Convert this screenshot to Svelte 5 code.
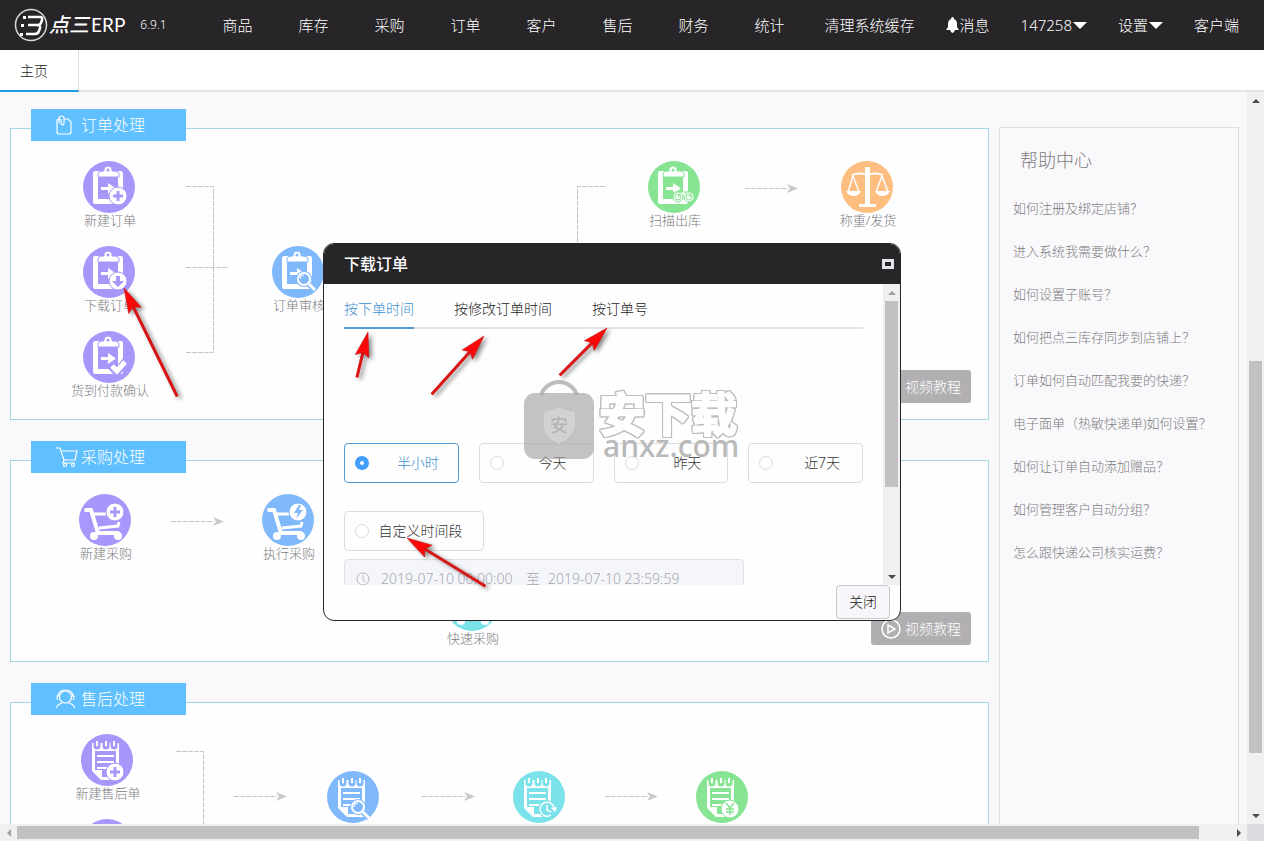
<script>
  const menu = ['商品', '库存', '采购', '订单', '客户', '售后', '财务', '统计'];

  // node x / y are the centre of the round icon inside the panel
  const panels = [
    {
      title: '订单处理',
      icon: 'note',
      size: 'tall',
      video: true,
      nodes: [
        { label: '新建订单', x: 98, y: 58, color: 'purple', icon: 'clipboard', badge: 'plus' },
        { label: '下载订单', x: 98, y: 143, color: 'purple', icon: 'clipboard', badge: 'down' },
        { label: '货到付款确认', x: 98, y: 228, color: 'purple', icon: 'clipboard', badge: 'check' },
        { label: '订单审核', x: 287, y: 143, color: 'blue', icon: 'clipboard', badge: 'search' },
        { label: '扫描出库', x: 663, y: 58, color: 'green', icon: 'clipboard', badge: 'scan' },
        { label: '称重/发货', x: 856, y: 58, color: 'orange', icon: 'scale' }
      ],
      lines: ['M175 57.5H202.5V223.5H175', 'M175 138.5H218', 'M594 57.5H566.5V170'],
      arrows: [{ x: 734, y: 59 }]
    },
    {
      title: '采购处理',
      icon: 'cart',
      size: 'short',
      video: true,
      nodes: [
        { label: '新建采购', x: 94, y: 59, color: 'purple', icon: 'cart', badge: 'plus' },
        { label: '执行采购', x: 277, y: 59, color: 'blue', icon: 'cart', badge: 'bolt' },
        { label: '快速采购', x: 461, y: 144, color: 'cyan', icon: 'cart', badge: 'bolt' }
      ],
      lines: [],
      arrows: [{ x: 160, y: 60 }]
    },
    {
      title: '售后处理',
      icon: 'service',
      size: 'tall',
      video: false,
      nodes: [
        { label: '新建售后单', x: 96, y: 57, color: 'purple', icon: 'notepad', badge: 'plus' },
        { label: '', x: 96, y: 142, color: 'purple', icon: 'notepad', badge: 'plus' },
        { label: '', x: 342, y: 94, color: 'blue', icon: 'notepad', badge: 'search' },
        { label: '', x: 528, y: 94, color: 'cyan', icon: 'notepad', badge: 'clock' },
        { label: '', x: 711, y: 94, color: 'green', icon: 'notepad', badge: 'yen' }
      ],
      lines: ['M165 48.5H192.5V133'],
      arrows: [{ x: 223, y: 93 }, { x: 411, y: 93 }, { x: 594, y: 93 }]
    }
  ];

  const helpLinks = [
    '如何注册及绑定店铺？',
    '进入系统我需要做什么？',
    '如何设置子账号？',
    '如何把点三库存同步到店铺上？',
    '订单如何自动匹配我要的快递？',
    '电子面单（热敏快递单)如何设置？',
    '如何让订单自动添加赠品？',
    '如何管理客户自动分组？',
    '怎么跟快递公司核实运费？'
  ];

  const tabs = ['按下单时间', '按修改订单时间', '按订单号'];
  const ranges = ['半小时', '今天', '昨天', '近7天'];

  // red pointers: tail -> tip
  const pointers = [
    { x1: 177, y1: 396, x2: 124, y2: 288 },
    { x1: 357, y1: 377, x2: 368, y2: 332 },
    { x1: 432, y1: 394, x2: 484, y2: 336 },
    { x1: 560, y1: 375, x2: 607, y2: 328 },
    { x1: 485, y1: 586, x2: 407, y2: 538 }
  ].map((p) => ({
    ...p,
    angle: (Math.atan2(p.y2 - p.y1, p.x2 - p.x1) * 180) / Math.PI,
    length: Math.hypot(p.x2 - p.x1, p.y2 - p.y1)
  }));

  let activeTab = tabs[0];
  let range = ranges[0];
  let startTime = '2019-07-10 00:00:00';
  let endTime = '2019-07-10 23:59:59';
  let open = true;

  const badgeCenter = {
    clipboard: '35 35',
    cart: '36 18',
    notepad: '34 38'
  };
</script>

{#snippet scrollbar(direction, before, thumb, after)}
  <div class="scrollbar {direction}" aria-hidden="true">
    <span class="step back" class:dim={before === 0}></span>
    <span style="flex: {before}"></span>
    <span class="thumb" style="flex: {thumb}"></span>
    <span style="flex: {after}"></span>
    <span class="step forward"></span>
  </div>
{/snippet}

{#snippet badge(kind, center)}
  <g transform="translate({center})">
    {#if kind === 'plus'}
      <circle r="9" class="chip" />
      <path d="M-5 0H5M0-5V5" class="ink" stroke-width="3" />
    {:else if kind === 'down'}
      <circle r="9" class="chip" />
      <path d="M-2-5H2V0H6L0 6L-6 0H-2Z" fill="currentColor" />
    {:else if kind === 'bolt'}
      <circle r="9" class="chip" />
      <path d="M1-7L-4 1H0L-2 7L5-2H1L3-7Z" fill="currentColor" />
    {:else if kind === 'check'}
      <path d="M-7 0L-1 6L8-5" class="ink" stroke-width="8" />
      <path d="M-6 0L-1 5L7-4" class="line" stroke-width="5" />
    {:else if kind === 'search'}
      <circle cx="-3" cy="-2" r="8" fill="currentColor" />
      <path d="M2 3L8 9" class="ink" stroke-width="6" />
      <path d="M2 3L8 9" class="line" stroke-width="3" />
      <circle cx="-3" cy="-2" r="6" fill="currentColor" stroke="#fff" stroke-width="2" />
      <path d="M-7-2A4 4 0 0 1-3-6" class="line" stroke-width="1" />
    {:else if kind === 'scan'}
      <path d="M-9-4H8L11 2H-11Z" fill="#fff" stroke="currentColor" />
      <circle cx="-5" cy="1" r="5" class="chip" />
      <circle cx="6" cy="1" r="5" class="chip" />
      <circle cx="-5" cy="1" r="3" fill="none" stroke="currentColor" />
      <circle cx="6" cy="1" r="3" fill="none" stroke="currentColor" />
      <circle cx="-4" cy="0" r="1" fill="currentColor" />
      <circle cx="7" cy="0" r="1" fill="currentColor" />
    {:else if kind === 'clock'}
      <circle r="8" fill="currentColor" stroke="currentColor" stroke-width="2" />
      <path d="M4 6A7 7 0 1 1 7-1M0-4V1L4 3" class="line" stroke-width="1.5" />
      <path d="M4-1L10-2L8 3Z" fill="#fff" />
    {:else if kind === 'yen'}
      <circle r="9" class="chip" />
      <path d="M-4-6L0-1L4-6M0-1V6M-4 0H4M-4 3H4" class="ink" stroke-width="1.5" />
    {/if}
  </g>
{/snippet}

{#snippet nodeIcon(node)}
  <svg class="node-icon {node.color}" viewBox="0 0 52 52" aria-hidden="true">
    <circle cx="26" cy="26" r="26" fill="currentColor" />
    {#if node.icon === 'clipboard'}
      <rect x="10" y="10" width="30" height="33" rx="2" fill="#fff" />
      <rect x="15" y="15" width="20" height="23" fill="currentColor" />
      <path
        d="M15 16V13Q15 10 19 10H21V8Q22 5 25 5Q28 5 29 8V10H32Q36 10 36 13V16Z"
        fill="#fff"
        stroke="currentColor"
      />
      <circle cx="25" cy="9" r="1.5" fill="currentColor" />
      <path d="M18 26H25V22L33 27.5L25 33V29H18Z" fill="#fff" />
    {:else if node.icon === 'cart'}
      <path d="M7 16H12L19 39H39" class="line" stroke-width="4" stroke-linecap="round" />
      <path d="M15 20H27M20 34L39 32L40 28" class="line" stroke-width="3" />
      <circle cx="15" cy="42" r="4" fill="#fff" />
      <circle cx="39" cy="42" r="4" fill="#fff" />
    {:else if node.icon === 'notepad'}
      <path d="M11 9H38V46H20L11 37Z" fill="#fff" />
      <path d="M14 17H35V43H21V36H14Z" fill="currentColor" />
      <path d="M14 37H20V43Z" fill="#fff" />
      <path d="M16 22H33M16 28H33M16 34H31" class="line" stroke-width="2" />
      {#each [16, 25, 33] as x}
        <path d="M{x - 2} 7V12A2 2 0 0 0 {x + 2} 12V7" class="ink" stroke-width="3" />
        <path d="M{x} 7V12" class="line" stroke-width="2" />
      {/each}
    {:else if node.icon === 'scale'}
      <path d="M24 6H29V43H35V46H18V43H24Z" fill="#fff" />
      <path d="M11 14Q18 11 26 14Q34 11 42 14" class="line" stroke-width="2" />
      <path d="M12 15L7 31M12 15L18 31M41 15L35 31M41 15L47 31" class="line" stroke-width="1.5" />
      <path d="M5 30H20Q18 35 12.5 35Q7 35 5 30ZM34 30H49Q47 35 41.5 35Q36 35 34 30Z" fill="#fff" />
    {/if}
    {#if node.badge}
      {@render badge(node.badge, badgeCenter[node.icon])}
    {/if}
  </svg>
{/snippet}

<div class="page">
  <header class="topbar">
    <a class="logo" href="#home" aria-label="点三ERP">
      <svg width="34" height="34" viewBox="0 0 34 34" aria-hidden="true">
        <circle cx="17" cy="17" r="15.5" fill="none" stroke="#d9d9db" stroke-width="1.5" />
        <path
          d="M14 9H26Q29 9 28 12L27 15Q26 17 23 17H14M23 17Q27 17 26 20L25 23Q24 26 21 26H12"
          fill="none"
          stroke="#fff"
          stroke-width="2.5"
        />
        <path d="M9 8H12V11H9ZM7 16H10V19H7ZM6 25H9V28H6Z" fill="#fff" />
      </svg>
      <span class="brand-cn">点三</span><span class="brand-en">ERP</span>
    </a>
    <span class="version">6.9.1</span>
    <nav class="menu">
      <div class="menu-main">
        {#each menu as item}
          <a href="#menu">{item}</a>
        {/each}
      </div>
      <div class="menu-side">
        <a href="#cache">清理系统缓存</a>
        <a href="#message">
          <svg width="13" height="16" viewBox="0 0 13 16" aria-hidden="true">
            <path d="M6.5 0Q8 0 8 2Q11 3 11 7V10L13 13H0L2 10V7Q2 3 5 2Q5 0 6.5 0ZM4 13H9Q8 16 6.5 16Q5 16 4 13Z" fill="#fff" />
          </svg>消息
        </a>
        <a href="#account">147258<span class="caret"></span></a>
        <a href="#settings">设置<span class="caret"></span></a>
        <a href="#client">客户端</a>
      </div>
    </nav>
  </header>

  <div class="tabstrip">
    <a class="page-tab" href="#home">主页</a>
  </div>

  <div class="workspace">
    <main class="content">
      <div class="panels">
        {#each panels as panel}
          <section class="panel {panel.size}">
            <h2 class="panel-title">
              <svg width="24" height="22" viewBox="0 0 24 22" aria-hidden="true">
                {#if panel.icon === 'note'}
                  <path d="M6 5H4Q2 5 2 7V18Q2 20 4 20H14Q16 20 16 18V8L13 5H9M4 9V4Q4 2 6.5 2Q9 2 9 4V9Q9 11 7.5 11Q6 11 6 9V5" />
                {:else if panel.icon === 'cart'}
                  <path d="M1 2H5L9 14H20L22 5H7M9 14L8 17H20" />
                  <circle cx="10" cy="19" r="1.5" />
                  <circle cx="18" cy="19" r="1.5" />
                {:else}
                  <circle cx="10.5" cy="9" r="6" />
                  <path d="M3 9Q3 2 10.5 2Q18 2 18 9M3 7Q1 9 3 12M18 7Q20 9 18 12M1 20Q3 16 7 15M20 20Q18 16 14 15" />
                {/if}
              </svg>
              {panel.title}
            </h2>
            <svg class="links" aria-hidden="true">
              {#each panel.lines as d}
                <path {d} class="dash" />
              {/each}
              {#each panel.arrows as arrow}
                <g transform="translate({arrow.x} {arrow.y})">
                  <path d="M0 0.5H43" class="dash" />
                  <path d="M42-4L53 0.5L42 5L45 0.5Z" fill="#c9c9cb" />
                </g>
              {/each}
            </svg>
            {#each panel.nodes as node}
              <a class="node" href="#node" style="left: {node.x}px; top: {node.y}px">
                {@render nodeIcon(node)}
                <span>{node.label}</span>
              </a>
            {/each}
            {#if panel.video}
              <button class="video">
                <svg width="20" height="20" viewBox="0 0 20 20" aria-hidden="true">
                  <circle cx="10" cy="10" r="9" fill="none" stroke="#fff" stroke-width="1.5" />
                  <path d="M7 6L14 10L7 14Z" fill="none" stroke="#fff" stroke-width="1.5" />
                </svg>
                视频教程
              </button>
            {/if}
          </section>
        {/each}
      </div>

      <aside class="help">
        <h2>帮助中心</h2>
        <ul>
          {#each helpLinks as link}
            <li><a href="#help">{link}</a></li>
          {/each}
        </ul>
      </aside>
    </main>
    {@render scrollbar('vertical', 252, 392, 54)}
  </div>
  <div class="bottom">
    {@render scrollbar('horizontal', 0, 1182, 31)}
    <span class="corner"></span>
  </div>

  {#if open}
    <div class="dialog" role="dialog" aria-labelledby="dialog-title">
      <div class="dialog-head">
        <h1 id="dialog-title">下载订单</h1>
        <button class="restore" aria-label="还原"></button>
      </div>
      <div class="dialog-main">
        <div class="dialog-body">
          <div class="tabs" role="tablist">
            {#each tabs as tab}
              <button
                role="tab"
                aria-selected={activeTab === tab}
                class:active={activeTab === tab}
                on:click={() => (activeTab = tab)}
              >
                {tab}
              </button>
            {/each}
          </div>
          <div class="ranges">
            {#each ranges as item}
              <label class="option" class:checked={range === item}>
                <input type="radio" name="range" value={item} bind:group={range} />
                <span>{item}</span>
              </label>
            {/each}
          </div>
          <label class="option custom" class:checked={range === 'custom'}>
            <input type="radio" name="range" value="custom" bind:group={range} />
            <span>自定义时间段</span>
          </label>
          <div class="period">
            <svg width="14" height="14" viewBox="0 0 14 14" aria-hidden="true">
              <circle cx="7" cy="7" r="6" fill="none" stroke="#b4b6bf" />
              <path d="M7 3V7L9 10" fill="none" stroke="#b4b6bf" />
            </svg>
            <input type="text" aria-label="开始时间" bind:value={startTime} disabled={range !== 'custom'} />
            <span>至</span>
            <input type="text" aria-label="结束时间" bind:value={endTime} disabled={range !== 'custom'} />
          </div>
        </div>
        {@render scrollbar('vertical', 0, 186, 81)}
      </div>
      <div class="dialog-foot">
        <button class="close" on:click={() => (open = false)}>关闭</button>
      </div>
    </div>
  {/if}

  <div class="watermark">
    <svg width="72" height="82" viewBox="0 0 72 82" aria-hidden="true">
      <path d="M18 16A19 19 0 0 1 54 16" fill="none" stroke="#bdbdbd" stroke-width="4" />
      <rect x="1" y="14" width="70" height="66" rx="11" fill="#aaa" fill-opacity="0.7" />
      <path d="M36 28Q43 32 52 33V47Q51 57 36 65Q21 57 21 47V33Q29 32 36 28Z" fill="#d2d2d2" />
      <text x="36" y="53" text-anchor="middle">安</text>
    </svg>
    <div class="mark-text">
      <span class="mark-cn">安下载</span>
      <span class="mark-en">anxz.com</span>
    </div>
  </div>

  <svg class="pointers" aria-hidden="true">
    {#each pointers as p}
      <g transform="translate({p.x2} {p.y2}) rotate({p.angle})">
        <path d="M{-p.length}-1L-20-1V1L{-p.length} 1Z" fill="#d81414" stroke="#d81414" stroke-linejoin="round" />
        <path d="M0 0L-25-7L-21 0L-25 7Z" fill="#fb0808" stroke="#c01010" stroke-width="0.5" />
      </g>
    {/each}
  </svg>
</div>

<style>
  :global(body) {
    margin: 0;
  }

  .page {
    position: relative;
    display: flex;
    flex-direction: column;
    height: 100vh;
    overflow: hidden;
    background: #f9f8fb;
    color: #222;
    font-family: 'Noto Sans', 'Noto Sans CJK SC', sans-serif;
    font-size: 14px;
    font-weight: 300;
    line-height: 20px;
  }

  a {
    color: inherit;
    text-decoration: none;
  }

  button,
  input {
    margin: 0;
    padding: 0;
    border: 0;
    background: none;
    color: inherit;
    font: inherit;
  }

  h1,
  h2,
  ul {
    margin: 0;
    padding: 0;
    font-weight: inherit;
    list-style: none;
  }

  /* top bar */
  .topbar {
    display: flex;
    align-items: center;
    height: 50px;
    padding: 0 25px 0 14px;
    background: #272528;
    color: #fff;
    white-space: nowrap;
  }

  .logo {
    display: flex;
    align-items: center;
  }

  .brand-cn {
    margin-left: 1px;
    font-size: 20px;
    font-style: italic;
    font-weight: 500;
  }

  .brand-en {
    margin-left: 2px;
    font-family: Lato, sans-serif;
    font-size: 19px;
    font-weight: 400;
  }

  .version {
    margin-left: 15px;
    font-size: 12px;
  }

  .menu {
    display: flex;
    gap: 40px;
    margin-left: auto;
    font-size: 15px;
  }

  .menu-main {
    display: flex;
    gap: 46px;
  }

  .menu-side {
    display: flex;
    gap: 31px;
  }

  .menu-side a {
    display: flex;
    align-items: center;
    gap: 1px;
  }

  .caret {
    border: 7px solid transparent;
    border-top-color: #fff;
    border-bottom-width: 0;
  }

  /* page tabs */
  .tabstrip {
    display: flex;
    height: 40px;
    border-bottom: 2px solid #e2e1e5;
    background: #fff;
  }

  .page-tab {
    height: 40px;
    padding: 0 30px 0 20px;
    border-right: 1px solid #dcdcdf;
    border-bottom: 2px solid #1c9be0;
    line-height: 42px;
  }

  /* work area */
  .workspace {
    display: flex;
    flex: 1;
    min-height: 0;
  }

  .content {
    display: flex;
    flex: 1;
    gap: 10px;
    padding: 35px 8px 0 10px;
    overflow: hidden;
  }

  .panels {
    display: flex;
    flex: 1;
    flex-direction: column;
    gap: 40px;
    padding-top: 1px;
  }

  .panel {
    position: relative;
    flex-shrink: 0;
    border: 1px solid #a3d7e8;
    background: #fefefe;
  }

  .panel.tall {
    height: 290px;
  }

  .panel.short {
    height: 200px;
  }

  .panel-title {
    position: absolute;
    top: -20px;
    left: 20px;
    display: flex;
    align-items: center;
    gap: 2px;
    box-sizing: border-box;
    width: 155px;
    height: 32px;
    padding-left: 24px;
    background: #5fbfff;
    color: #fff;
    font-size: 16px;
  }

  .panel-title svg {
    fill: none;
    stroke: #fff;
    stroke-width: 1.2;
  }

  .links {
    position: absolute;
    top: 0;
    left: 0;
    width: 100%;
    height: 100%;
  }

  .dash {
    fill: none;
    stroke: #c6c6c8;
    stroke-dasharray: 5 1;
  }

  .node {
    position: absolute;
    display: flex;
    flex-direction: column;
    align-items: center;
    width: 100px;
    margin: -26px 0 0 -49px;
    color: #7c7c7e;
    font-size: 13px;
    line-height: 15px;
  }

  .node-icon {
    width: 52px;
    height: 52px;
    margin-right: 2px;
  }

  .purple { color: #a698fa; }
  .blue { color: #80b8fc; }
  .green { color: #86e493; }
  .orange { color: #fdbe80; }
  .cyan { color: #7be2e9; }

  .chip {
    fill: #fff;
    stroke: currentColor;
  }

  .ink {
    fill: none;
    stroke: currentColor;
  }

  .line {
    fill: none;
    stroke: #fff;
  }

  .video {
    position: absolute;
    right: 17px;
    bottom: 16px;
    display: flex;
    align-items: center;
    gap: 4px;
    height: 33px;
    padding: 0 10px;
    border-radius: 3px;
    background: #b1afb2;
    color: #fff;
  }

  .help {
    box-sizing: border-box;
    width: 240px;
    padding-top: 12px;
    border: 1px solid #dddce1;
    border-bottom: 0;
    color: #7c7c7e;
  }

  .help h2 {
    padding: 0 20px 7px;
    font-size: 18px;
    line-height: 40px;
  }

  .help li {
    padding-left: 13px;
    font-size: 13px;
    line-height: 43px;
    white-space: nowrap;
  }

  /* scrollbars */
  .scrollbar {
    display: flex;
    box-sizing: border-box;
    background: #f0eff2;
  }

  .scrollbar.vertical {
    flex-direction: column;
    width: 17px;
    padding: 0 2px;
  }

  .scrollbar.horizontal {
    flex: 1;
    height: 17px;
    padding: 2px 0;
  }

  .thumb {
    background: #c2c0c3;
  }

  .step {
    display: flex;
    align-items: center;
    justify-content: center;
    flex: 0 0 17px;
  }

  .step::before {
    border: 4px solid transparent;
    content: '';
  }

  .vertical .back::before {
    border-top-width: 0;
    border-bottom-color: #49484b;
  }

  .vertical .forward::before {
    border-bottom-width: 0;
    border-top-color: #49484b;
  }

  .horizontal .back::before {
    border-left-width: 0;
    border-right-color: #49484b;
  }

  .horizontal .forward::before {
    border-right-width: 0;
    border-left-color: #49484b;
  }

  .vertical .dim::before {
    border-bottom-color: #a09fa2;
  }

  .horizontal .dim::before {
    border-right-color: #a09fa2;
  }

  .bottom {
    display: flex;
  }

  .corner {
    width: 17px;
    background: #dddce0;
  }

  /* dialog */
  .dialog {
    position: absolute;
    top: 243px;
    left: 323px;
    width: 576px;
    overflow: hidden;
    border: 1px solid #272528;
    border-radius: 11px;
    background: #fefefe;
  }

  .dialog-head {
    display: flex;
    align-items: center;
    justify-content: space-between;
    height: 40px;
    padding: 0 6px 0 20px;
    background: #272528;
    color: #fff;
  }

  .dialog-head h1 {
    font-size: 16px;
    font-weight: 500;
  }

  .restore {
    box-sizing: border-box;
    width: 12px;
    height: 10px;
    border: 3px solid #e6e5f0;
  }

  .dialog-main {
    display: flex;
    height: 301px;
  }

  .dialog-body {
    flex: 1;
    padding: 0 20px;
    overflow: hidden;
  }

  .tabs {
    display: flex;
    gap: 40px;
    margin-bottom: 114px;
    padding-top: 7px;
    box-shadow: inset 0 -2px #e3e3e8;
  }

  .tabs button {
    height: 38px;
    border-bottom: 2px solid transparent;
    cursor: pointer;
  }

  .tabs .active {
    border-bottom-color: #529ad2;
    color: #3b8fd0;
  }

  .ranges {
    display: grid;
    grid-template-columns: repeat(4, 1fr);
    gap: 20px;
    margin-bottom: 28px;
  }

  .option {
    display: flex;
    align-items: center;
    gap: 9px;
    box-sizing: border-box;
    height: 40px;
    padding-left: 10px;
    border: 1px solid #dcdbe0;
    border-radius: 4px;
    color: #333;
  }

  .option span {
    flex: 1;
    text-align: center;
  }

  .option input {
    appearance: none;
    box-sizing: border-box;
    width: 14px;
    height: 14px;
    border: 1px solid #dcdbe0;
    border-radius: 50%;
    background: #fff;
  }

  .option.checked {
    border-color: #529ad2;
    color: #3b8fd0;
  }

  .option input:checked {
    border: 5px solid #409eff;
  }

  .option.custom {
    width: 140px;
    margin-bottom: 8px;
    padding-right: 20px;
  }

  .period {
    display: flex;
    align-items: center;
    box-sizing: border-box;
    width: 400px;
    height: 40px;
    padding-left: 11px;
    border: 1px solid #e0e0e7;
    border-radius: 4px;
    background: #f5f6fb;
    color: #a6a8b0;
  }

  .period input {
    width: 145px;
    color: #a6a8b0;
  }

  .period svg {
    margin-right: 11px;
  }

  .period span {
    margin-right: 8px;
  }

  .dialog-foot {
    display: flex;
    justify-content: flex-end;
    padding: 0 10px 1px;
  }

  .close {
    height: 34px;
    padding: 0 12px;
    border: 1px solid #c9c7cc;
    border-radius: 4px;
    background: #f8f6fa;
    cursor: pointer;
  }

  /* overlays */
  .watermark {
    position: absolute;
    top: 379px;
    left: 523px;
    display: flex;
    gap: 4px;
    pointer-events: none;
  }

  .watermark text {
    fill: #b4b4b4;
    font-size: 18px;
    font-weight: 500;
  }

  .mark-text {
    display: flex;
    flex-direction: column;
    padding-top: 12px;
  }

  .mark-cn {
    color: #fefefe;
    filter: drop-shadow(1px 0 0 #bcbcbc) drop-shadow(-1px 0 0 #bcbcbc) drop-shadow(0 1px 0 #bcbcbc)
      drop-shadow(0 -1px 0 #bcbcbc);
    font-size: 46px;
    font-weight: 700;
    line-height: 44px;
    -webkit-text-stroke: 2px #fefefe;
  }

  .mark-en {
    padding-left: 4px;
    color: #b9b9b9;
    font-size: 30px;
    font-weight: 500;
    line-height: 22px;
  }

  .pointers {
    position: absolute;
    top: 0;
    left: 0;
    width: 100%;
    height: 100%;
    filter: drop-shadow(3px 2px 2px rgba(0, 0, 0, 0.45));
    pointer-events: none;
  }
</style>
